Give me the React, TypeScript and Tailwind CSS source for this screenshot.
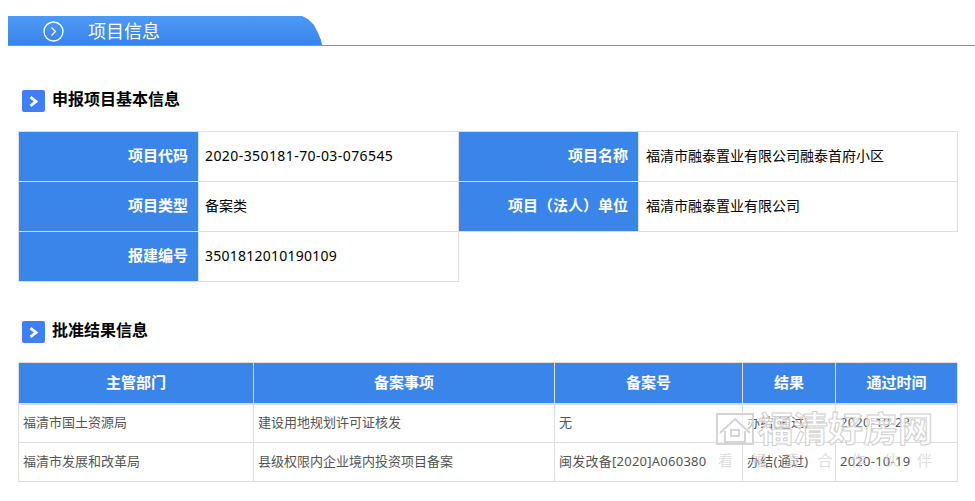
const cjk = "font-['Noto_Sans','Noto_Sans_CJK_SC',sans-serif]";

const infoRows = [
    [
        { label: "项目代码", value: "2020-350181-70-03-076545", spacing: "pl-[6px] tracking-[0.42px]" },
        { label: "项目名称", value: "福清市融泰置业有限公司融泰首府小区", spacing: "pl-[7px]" },
    ],
    [
        { label: "项目类型", value: "备案类", spacing: "pl-[6px]" },
        { label: "项目（法人）单位", value: "福清市融泰置业有限公司", spacing: "pl-[7px]" },
    ],
    [{ label: "报建编号", value: "3501812010190109", spacing: "pl-[6px] tracking-[0.25px]" }],
];

const resultHead = ["主管部门", "备案事项", "备案号", "结果", "通过时间"];

const resultRows = [
    ["福清市国土资源局", "建设用地规划许可证核发", "无", "办结(通过)", "2020-10-23"],
    ["福清市发展和改革局", "县级权限内企业境内投资项目备案", "闽发改备[2020]A060380", "办结(通过)", "2020-10-19"],
];

function SectionTitle({ title, className }: { title: string; className: string }) {
    return (
        <div className={`flex items-center gap-[7px] ml-[22px] ${className}`}>
            <span className="w-[23px] h-[22px] rounded-[2px] bg-[#3f7ff5] flex items-center justify-center">
                <svg width="13" height="13" viewBox="0 0 13 13" fill="none">
                    <path d="M3.5 2.2 L9 6.5 L3.5 10.8" stroke="#fff" strokeWidth="2.8" />
                </svg>
            </span>
            <h2 className="text-[16px] leading-[23px] font-bold text-black -mt-[3px]">{title}</h2>
        </div>
    );
}

function Watermark() {
    return (
        <div className="absolute left-[716px] top-[411px] pointer-events-none">
            <div className="flex items-center gap-[4px]">
                <svg width="38" height="36" viewBox="0 0 38 36" fill="#ffffff" fillOpacity="0.55" stroke="#d4d4d4" strokeWidth="2">
                    <path d="M1 3 H37 V33 H1 Z" />
                    <path d="M4 22 L19 8 L34 22 M9 20 V31 H29 V20" />
                    <path d="M15 25 H23 V19 H15 Z" />
                </svg>
                <span className="text-[35px] leading-[36px] font-bold text-white/70 [-webkit-text-stroke:1px_#cfcfcf]">福清好房网</span>
            </div>
            <div className="flex justify-between w-[216px] mt-[3px] pl-[2px] text-[15px] leading-[20px] text-[#d4d4d4]/80">
                {"看福清合作伙伴".split("").map((c, i) => <span key={i}>{c}</span>)}
            </div>
        </div>
    );
}

export default function App() {
    return (
        <div className={`relative w-[975px] h-[501px] bg-white overflow-hidden ${cjk}`}>
            <div className="pt-4 pl-2">
                <div className="border-b border-[#5a9af0] h-[30px]">
                    <div className="w-[314px] h-[29px] [clip-path:polygon(0_0,294px_0,300px_3px,306px_9px,310px_17px,313px_24px,314px_29px,0_29px)] bg-gradient-to-b from-[#4c9af7] to-[#3a84ea] flex items-center pl-[35px] text-white">
                        <svg width="21" height="21" viewBox="0 0 21 21" fill="none" stroke="#fff" className="mt-[2px]">
                            <circle cx="10.5" cy="10.5" r="9.5" strokeWidth="1.3" />
                            <path d="M8.5 6.5 L12.5 10.5 L8.5 14.5" strokeWidth="1.2" />
                        </svg>
                        <span className="ml-6 text-[18px] leading-[29px] mt-[1px]">项目信息</span>
                    </div>
                </div>
            </div>

            <SectionTitle title="申报项目基本信息" className="mt-[44px]" />

            <table className="ml-[18px] mt-[19px] w-[939px] table-fixed border-collapse text-[14px]">
                <colgroup>
                    <col className="w-[180px]" />
                    <col className="w-[260px]" />
                    <col className="w-[180px]" />
                    <col className="w-[319px]" />
                </colgroup>
                <tbody>
                    {infoRows.map((row, i) => (
                        <tr key={i} className="h-[50px]">
                            {row.map((cell) => [
                                <th key={cell.label} className="border border-[#dddddd] bg-[#3a85ea] text-white text-right pr-[10px] pb-[3px] text-[15px] font-bold">
                                    {cell.label}
                                </th>,
                                <td key={cell.value} className={`border border-[#dddddd] text-black pb-[3px] ${cell.spacing}`}>
                                    {cell.value}
                                </td>,
                            ])}
                        </tr>
                    ))}
                </tbody>
            </table>

            <SectionTitle title="批准结果信息" className="mt-[39px]" />

            <table className="ml-[18px] mt-[19px] w-[939px] table-fixed border-collapse text-[13px]">
                <colgroup>
                    <col className="w-[235px]" />
                    <col className="w-[301px]" />
                    <col className="w-[188px]" />
                    <col className="w-[93px]" />
                    <col className="w-[122px]" />
                </colgroup>
                <thead>
                    <tr className="h-[41px]">
                        {resultHead.map((h) => (
                            <th key={h} className="border border-[#dddddd] border-b-2 bg-[#3a85ea] text-white text-center pb-[2px] text-[15px] font-bold">
                                {h}
                            </th>
                        ))}
                    </tr>
                </thead>
                <tbody>
                    {resultRows.map((row, i) => (
                        <tr key={i} className="h-[39px]">
                            {row.map((c, j) => (
                                <td key={j} className={`border border-[#dddddd] text-[#555555] pl-[4px] pb-[1px] ${j >= 2 ? "tracking-[0.25px]" : ""}`}>
                                    {c}
                                </td>
                            ))}
                        </tr>
                    ))}
                </tbody>
            </table>

            <Watermark />
        </div>
    );
}
